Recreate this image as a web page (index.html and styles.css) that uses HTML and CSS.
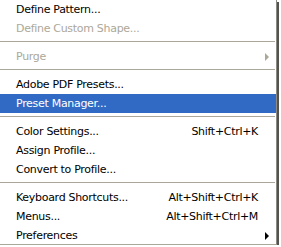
FILE: index.html
```html
<!DOCTYPE html>
<html lang="en">

<head>
    <meta charset="UTF-8">
    <title>Edit menu</title>
    <link rel="stylesheet" href="styles.css">
</head>

<body>

    <div class="menu">
        <div class="item"><span class="label">Define Pattern...</span></div>
        <div class="item disabled"><span class="label">Define Custom Shape...</span></div>
        <div class="sep"></div>
        <div class="item disabled"><span class="label">Purge</span><span class="arrow"></span></div>
        <div class="sep"></div>
        <div class="item"><span class="label">Adobe PDF Presets...</span></div>
        <div class="item active"><span class="label">Preset Manager...</span></div>
        <div class="sep"></div>
        <div class="item"><span class="label">Color Settings...</span><span class="key">Shift+Ctrl+K</span></div>
        <div class="item"><span class="label">Assign Profile...</span></div>
        <div class="item"><span class="label">Convert to Profile...</span></div>
        <div class="sep"></div>
        <div class="item"><span class="label">Keyboard Shortcuts...</span><span class="key">Alt+Shift+Ctrl+K</span></div>
        <div class="item"><span class="label">Menus...</span><span class="key">Alt+Shift+Ctrl+M</span></div>
        <div class="item"><span class="label">Preferences</span><span class="arrow"></span></div>
    </div>

</body>

</html>
```

FILE: styles.css
```css
body {
    margin: 0;
    background: #fff;
    font-family: "DejaVu Sans", Tahoma, sans-serif;
    font-size: 11px;
    letter-spacing: -0.3px;
    color: #000;
}

.menu {
    width: 277px;
    height: 245px;
    background: #fff;
    border-right: 1px solid #8c8a85;
    border-bottom: 1px solid #aca899;
    box-shadow: 2px 2px 0 #55534e;
    box-sizing: border-box;
}

.item {
    display: flex;
    align-items: center;
    height: 19px;
    padding-left: 16px;
    padding-right: 18px;
    position: relative;
}

.item .label {
    flex: 1;
}

.item .key {
    text-align: right;
}

.item.disabled {
    color: #aca899;
}

.item.active {
    background: #316ac5;
    color: #fff;
}

.arrow {
    position: absolute;
    right: 7px;
    top: 6px;
    width: 0;
    height: 0;
    border-top: 4px solid transparent;
    border-bottom: 4px solid transparent;
    border-left: 4px solid #000;
}

.disabled .arrow {
    border-left-color: #aca899;
}

.sep {
    height: 1px;
    margin: 3px 1px 5px 0;
    background: #aca899;
}
```
